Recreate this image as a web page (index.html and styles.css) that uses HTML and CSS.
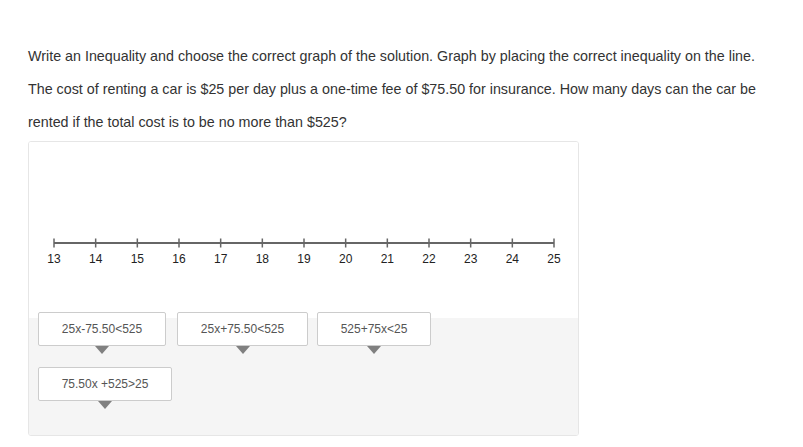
FILE: index.html
```html
<!DOCTYPE html>
<html lang="en">

<head>
    <meta charset="UTF-8">
    <meta name="viewport" content="width=device-width, initial-scale=1.0">
    <title>Inequality graph</title>
    <link rel="stylesheet" href="styles.css">
</head>

<body>
    <div class="question">
        <p>Write an Inequality and choose the correct graph of the solution. Graph by placing the correct inequality on the line.</p>
        <p>The cost of renting a car is $25 per day plus a one-time fee of $75.50 for insurance. How many days can the car be rented if the total cost is to be no more than $525?</p>
    </div>

    <div class="panel">
        <div class="board">
            <svg class="number-line" width="549" height="176" viewBox="0 0 549 176">
                <g stroke="#666" fill="none">
                    <line x1="25" y1="101" x2="525" y2="101" stroke-width="2" />
                    <g stroke-width="1.5">
                        <line x1="25" y1="96.5" x2="25" y2="105.5" />
                        <line x1="66.67" y1="96.5" x2="66.67" y2="105.5" />
                        <line x1="108.33" y1="96.5" x2="108.33" y2="105.5" />
                        <line x1="150" y1="96.5" x2="150" y2="105.5" />
                        <line x1="191.67" y1="96.5" x2="191.67" y2="105.5" />
                        <line x1="233.33" y1="96.5" x2="233.33" y2="105.5" />
                        <line x1="275" y1="96.5" x2="275" y2="105.5" />
                        <line x1="316.67" y1="96.5" x2="316.67" y2="105.5" />
                        <line x1="358.33" y1="96.5" x2="358.33" y2="105.5" />
                        <line x1="400" y1="96.5" x2="400" y2="105.5" />
                        <line x1="441.67" y1="96.5" x2="441.67" y2="105.5" />
                        <line x1="483.33" y1="96.5" x2="483.33" y2="105.5" />
                        <line x1="525" y1="96.5" x2="525" y2="105.5" />
                    </g>
                </g>
                <g class="ticks" text-anchor="middle">
                    <text x="25" y="121">13</text>
                    <text x="66.67" y="121">14</text>
                    <text x="108.33" y="121">15</text>
                    <text x="150" y="121">16</text>
                    <text x="191.67" y="121">17</text>
                    <text x="233.33" y="121">18</text>
                    <text x="275" y="121">19</text>
                    <text x="316.67" y="121">20</text>
                    <text x="358.33" y="121">21</text>
                    <text x="400" y="121">22</text>
                    <text x="441.67" y="121">23</text>
                    <text x="483.33" y="121">24</text>
                    <text x="525" y="121">25</text>
                </g>
            </svg>
        </div>

        <!-- draggable answers -->
        <div class="tray">
            <div class="chips">
                <div class="chip chip-a">25x-75.50&lt;525</div>
                <div class="chip chip-b">25x+75.50&lt;525</div>
                <div class="chip chip-c">525+75x&lt;25</div>
                <div class="chip chip-d">75.50x +525&gt;25</div>
            </div>
        </div>
    </div>
</body>

</html>
```

FILE: styles.css
```css
body {
    margin: 0;
    font-family: 'Liberation Sans', Arial, sans-serif;
    font-size: 14.3px;
    color: #333;
    background: #fff;
}

.question {
    padding: 40px 0 0 28px;
    width: 765px;
}

.question p {
    margin: 0;
    line-height: 33px;
}

.panel {
    margin: 2px 0 0 28px;
    width: 549px;
    border: 1px solid #e6e6e6;
    border-radius: 3px;
    overflow: hidden;
}

.board {
    height: 176px;
    background: #fff;
}

.number-line {
    display: block;
}

.ticks text {
    font-family: 'Liberation Sans', Arial, sans-serif;
    font-size: 12px;
    fill: #222;
}

.tray {
    display: flow-root;
    height: 117px;
    background: #f5f5f5;
    padding: 0 9px;
}

.chips {
    display: flex;
    flex-wrap: wrap;
    gap: 21px 11px;
    margin-top: -6px;
    width: 400px;
}

.chip {
    position: relative;
    height: 32px;
    line-height: 32px;
    box-sizing: content-box;
    border: 1px solid #ccc;
    border-radius: 2px;
    background: #fff;
    color: #555;
    font-size: 12px;
    text-align: center;
}

.chip::after {
    content: "";
    position: absolute;
    left: 50%;
    top: 100%;
    margin: 1px 0 0 -7px;
    border-left: 7px solid transparent;
    border-right: 7px solid transparent;
    border-top: 8px solid #808080;
}

.chip-a { width: 126px; }
.chip-b { width: 129px; }
.chip-c { width: 112px; margin-left: -2px; }
.chip-d { width: 132px; margin-right: 200px; }
```
